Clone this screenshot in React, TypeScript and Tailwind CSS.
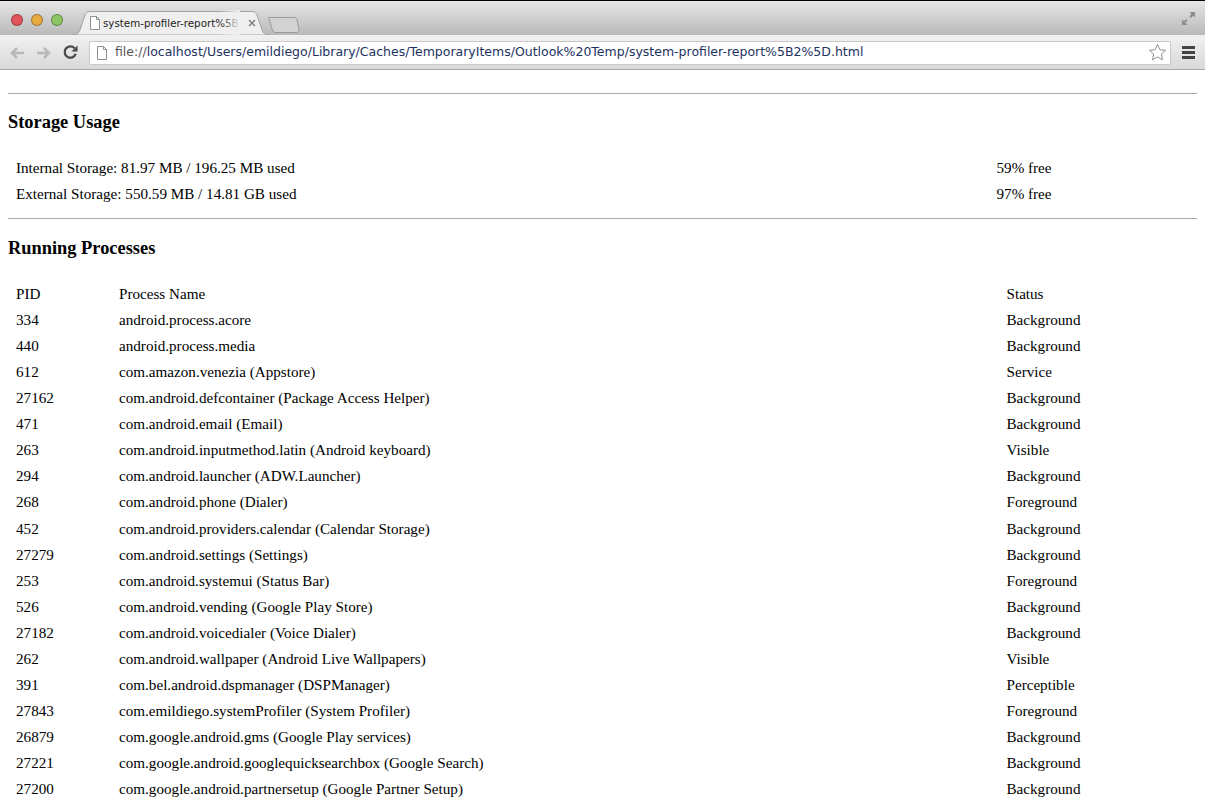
const processes = [
  ['334', 'android.process.acore', 'Background'],
  ['440', 'android.process.media', 'Background'],
  ['612', 'com.amazon.venezia (Appstore)', 'Service'],
  ['27162', 'com.android.defcontainer (Package Access Helper)', 'Background'],
  ['471', 'com.android.email (Email)', 'Background'],
  ['263', 'com.android.inputmethod.latin (Android keyboard)', 'Visible'],
  ['294', 'com.android.launcher (ADW.Launcher)', 'Background'],
  ['268', 'com.android.phone (Dialer)', 'Foreground'],
  ['452', 'com.android.providers.calendar (Calendar Storage)', 'Background'],
  ['27279', 'com.android.settings (Settings)', 'Background'],
  ['253', 'com.android.systemui (Status Bar)', 'Foreground'],
  ['526', 'com.android.vending (Google Play Store)', 'Background'],
  ['27182', 'com.android.voicedialer (Voice Dialer)', 'Background'],
  ['262', 'com.android.wallpaper (Android Live Wallpapers)', 'Visible'],
  ['391', 'com.bel.android.dspmanager (DSPManager)', 'Perceptible'],
  ['27843', 'com.emildiego.systemProfiler (System Profiler)', 'Foreground'],
  ['26879', 'com.google.android.gms (Google Play services)', 'Background'],
  ['27221', 'com.google.android.googlequicksearchbox (Google Search)', 'Background'],
  ['27200', 'com.google.android.partnersetup (Google Partner Setup)', 'Background'],
];

function PageIcon({ className }: { className: string }) {
  return (
    <svg viewBox="0 0 12 14" className={className} fill="#fff" stroke="#8f8f8f" strokeWidth="1">
      <path d="M1.5 .5h6l3 3v10h-9z" />
      <path d="M7.5 .5v3h3" fill="none" />
    </svg>
  );
}

function Light({ color }: { color: string }) {
  return <div className={`h-[12px] w-[12px] rounded-full border border-black/30 ${color}`} />;
}

function TitleBar() {
  return (
    <div className="flex h-[35px] items-end border-t border-black bg-gradient-to-b from-[#e6e6e6] to-[#b9b9b9]">
      <div className="mb-[9px] ml-[11px] flex gap-[8px]">
        <Light color="bg-[#e2535a]" />
        <Light color="bg-[#e8ab3f]" />
        <Light color="bg-[#8cc763]" />
      </div>
      <div className="relative ml-[10px] flex h-[24px] w-[197px] items-center pl-[16px]">
        <svg viewBox="0 0 197 24" className="absolute inset-0 h-full w-full">
          <path d="M0 24C4 24 6 22 7 19L12 4C13 1.500 14 .5 17 .5H179C182 .5 183 1.500 184 4L189 19C190 22 192 24 197 24Z" fill="#efefef" stroke="#a3a3a3" />
        </svg>
        <PageIcon className="relative h-[14px] w-[12px]" />
        <span className="relative ml-[2px] w-[137px] whitespace-nowrap font-['DejaVu_Sans',sans-serif] text-[10.300px] text-[#222]">
          system-profiler-report%5B
          <span className="absolute inset-y-0 right-0 w-[20px] bg-gradient-to-r from-transparent to-[#efefef]" />
        </span>
        <svg viewBox="0 0 8 8" className="relative ml-[8px] h-[8px] w-[8px]" stroke="#808080" strokeWidth="1.500">
          <path d="M1 1l6 6M7 1l-6 6" />
        </svg>
      </div>
      <svg viewBox="0 0 32 16" className="mb-[2px] ml-[-2px] h-[16px] w-[32px]">
        <path d="M.5 .5H26C28 .5 28.500 1.500 29 3L31 12C31.500 14.500 30.500 15.500 28 15.500H8C6 15.500 5 14.500 4.500 13L1 2C.8 1 .5 .5 .5 .5Z" fill="#d2d2d2" stroke="#9a9a9a" />
      </svg>
      <svg viewBox="0 0 16 16" className="mb-[9px] ml-auto mr-[9px] h-[15px] w-[15px]" fill="#8e8e8e">
        <path d="M9 1h6v6l-2-2-2.500 2.500-1.500-1.500L11 3zM7 15H1V9l2 2 2.500-2.500L7 10l-2.500 2.500z" />
      </svg>
    </div>
  );
}

function Toolbar() {
  return (
    <div className="flex h-[35px] items-center border-b border-[#a8a8a8] bg-gradient-to-b from-[#f1f1f1] to-[#d9d9d9] pt-[1px]">
      <svg viewBox="0 0 16 14" className="ml-[9px] h-[14px] w-[16px]" fill="none" stroke="#b9b9b9" strokeWidth="2.500">
        <path d="M15 7H3M8 2L3 7l5 5" />
      </svg>
      <svg viewBox="0 0 16 14" className="ml-[11px] h-[14px] w-[16px]" fill="none" stroke="#b9b9b9" strokeWidth="2.500">
        <path d="M1 7h12M8 2l5 5-5 5" />
      </svg>
      <svg viewBox="0 0 16 16" className="ml-[11px] h-[15px] w-[15px]" fill="none" stroke="#4a4a4a" strokeWidth="2.500">
        <path d="M13.500 9.500A6 6 0 1 1 12.300 3.500" />
        <path d="M15.500 .5v6.500h-6.500z" fill="#4a4a4a" stroke="none" />
      </svg>
      <div className="ml-[11px] flex h-[24px] w-[1082px] items-center rounded-[2px] border border-[#c9c9c9] bg-white pl-[6px] pr-[3px]">
        <PageIcon className="h-[14px] w-[12px]" />
        <span className="ml-[7px] whitespace-nowrap font-['DejaVu_Sans',sans-serif] text-[12.500px] text-[#22325f]">
          <span className="text-[#555]">file://</span>localhost/Users/emildiego/Library/Caches/TemporaryItems/Outlook%20Temp/system-profiler-report%5B2%5D.html
        </span>
        <svg viewBox="0 0 20 20" className="ml-auto h-[19px] w-[19px]" fill="#fff" stroke="#8a8a8a" strokeWidth="1">
          <path d="M10 1.500l2.500 5.600 6 .6-4.500 4 1.300 6L10 14.600l-5.300 3.100 1.300-6-4.500-4 6-.6z" />
        </svg>
      </div>
      <div className="ml-[11px] flex flex-col gap-[2px]">
        <div className="h-[3px] w-[13px] bg-[#444]" />
        <div className="h-[3px] w-[13px] bg-[#444]" />
        <div className="h-[3px] w-[13px] bg-[#444]" />
      </div>
    </div>
  );
}

export default function App() {
  return (
    <div className="h-[800px] overflow-hidden bg-white font-['Liberation_Serif',serif] text-[15.150px] leading-[26.050px] text-black">
      <TitleBar />
      <Toolbar />
      <div className="px-[8px] pt-[23px]">
        <hr className="border-t border-[#a8a8a8]" />
        <h3 className="mt-[15px] text-[18.400px] font-bold leading-[27px]">Storage Usage</h3>
        <div className="mt-[19px] pl-[8px]">
          <div className="flex">
            <div className="w-[980.500px]">Internal Storage: 81.97 MB / 196.25 MB used</div>
            <div>59% free</div>
          </div>
          <div className="flex">
            <div className="w-[980.500px]">External Storage: 550.59 MB / 14.81 GB used</div>
            <div>97% free</div>
          </div>
        </div>
        <hr className="mt-[11px] border-t border-[#a8a8a8]" />
        <h3 className="mt-[16px] text-[18.400px] font-bold leading-[27px]">Running Processes</h3>
        <div className="mt-[19px] pl-[8px]">
          <div className="flex">
            <div className="w-[103px]">PID</div>
            <div className="w-[887.500px]">Process Name</div>
            <div>Status</div>
          </div>
          {processes.map(([pid, name, status]) => (
            <div className="flex" key={pid}>
              <div className="w-[103px]">{pid}</div>
              <div className="w-[887.500px]">{name}</div>
              <div>{status}</div>
            </div>
          ))}
        </div>
      </div>
    </div>
  );
}
